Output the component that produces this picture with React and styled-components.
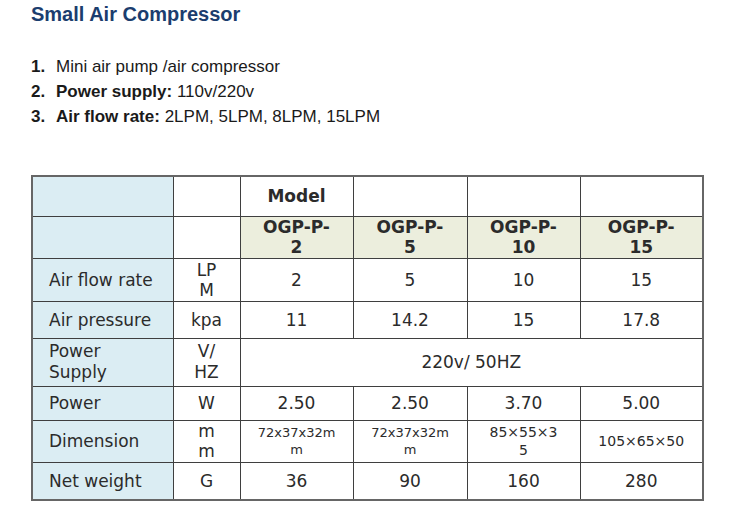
import React from "react";
import styled, { createGlobalStyle } from "styled-components";

const Global = createGlobalStyle`
  html, body { margin: 0; padding: 0; background: #ffffff; }
  body { font-family: "Liberation Sans", Arial, sans-serif; }
`;

const Page = styled.div`
  width: 750px;
  height: 520px;
  padding: 2px 0 0 31px;
  box-sizing: border-box;
  overflow: hidden;
`;

const Title = styled.h1`
  margin: 0;
  font-family: "Liberation Sans", Arial, sans-serif;
  font-weight: bold;
  font-size: 20px;
  line-height: 24px;
  color: #1b3d6e;
`;

const List = styled.ol`
  list-style: none;
  margin: 28px 0 0 0;
  padding: 0;
  font-family: "Liberation Sans", Arial, sans-serif;
  font-size: 17px;
  line-height: 25px;
  color: #1a1a1a;
`;

const Item = styled.li`
  display: flex;
`;

const Num = styled.span`
  font-weight: bold;
  width: 25px;
  flex: none;
`;

const Strong = styled.b`
  font-weight: bold;
`;

const Table = styled.table`
  margin-top: 46px;
  border-collapse: collapse;
  table-layout: fixed;
  width: 671px;
  border: 2px solid #666;
  font-family: "DejaVu Sans", Verdana, sans-serif;
  font-size: 17px;
  color: #2b2b2b;
`;

const Cell = styled.td`
  border: 1.5px solid #3f3f3f;
  padding: 0;
  text-align: ${(p) => (p.$left ? "left" : "center")};
  padding-left: ${(p) => (p.$left ? "16px" : "0")};
  vertical-align: middle;
  background: ${(p) => (p.$bg === "blue" ? "#dbedf3" : p.$bg === "green" ? "#eceedd" : "#ffffff")};
  font-weight: ${(p) => (p.$bold ? "bold" : "normal")};
  font-size: ${(p) => p.$size || "17px"};
  line-height: ${(p) => p.$lh || "20px"};
`;

const Row = styled.tr`
  height: ${(p) => p.$h}px;
`;

const models = ["2", "5", "10", "15"];

export default function App() {
  return (
    <>
      <Global />
      <Page>
        <Title>Small Air Compressor</Title>
        <List>
          <Item><Num>1.</Num><span>Mini air pump /air compressor</span></Item>
          <Item><Num>2.</Num><span><Strong>Power supply:</Strong> 110v/220v</span></Item>
          <Item><Num>3.</Num><span><Strong>Air flow rate:</Strong> 2LPM, 5LPM, 8LPM, 15LPM</span></Item>
        </List>
        <Table>
          <colgroup>
            <col style={{ width: 141 }} />
            <col style={{ width: 67 }} />
            <col style={{ width: 113 }} />
            <col style={{ width: 114 }} />
            <col style={{ width: 113 }} />
            <col style={{ width: 123 }} />
          </colgroup>
          <tbody>
            <Row $h={40}>
              <Cell $bg="blue" />
              <Cell />
              <Cell $bold>Model</Cell>
              <Cell />
              <Cell />
              <Cell />
            </Row>
            <Row $h={42}>
              <Cell $bg="blue" />
              <Cell />
              {models.map((m) => (
                <Cell key={m} $bg="green" $bold>OGP-P-<br />{m}</Cell>
              ))}
            </Row>
            <Row $h={43}>
              <Cell $bg="blue" $left>Air flow rate</Cell>
              <Cell>LP<br />M</Cell>
              <Cell>2</Cell>
              <Cell>5</Cell>
              <Cell>10</Cell>
              <Cell>15</Cell>
            </Row>
            <Row $h={37}>
              <Cell $bg="blue" $left>Air pressure</Cell>
              <Cell>kpa</Cell>
              <Cell>11</Cell>
              <Cell>14.2</Cell>
              <Cell>15</Cell>
              <Cell>17.8</Cell>
            </Row>
            <Row $h={48}>
              <Cell $bg="blue" $left $lh="21px">Power<br />Supply</Cell>
              <Cell $lh="21px">V/<br />HZ</Cell>
              <Cell colSpan={4}>220v/ 50HZ</Cell>
            </Row>
            <Row $h={34}>
              <Cell $bg="blue" $left>Power</Cell>
              <Cell>W</Cell>
              <Cell>2.50</Cell>
              <Cell>2.50</Cell>
              <Cell>3.70</Cell>
              <Cell>5.00</Cell>
            </Row>
            <Row $h={42}>
              <Cell $bg="blue" $left>Dimension</Cell>
              <Cell>m<br />m</Cell>
              <Cell $size="13px" $lh="17px">72x37x32m<br />m</Cell>
              <Cell $size="13px" $lh="17px">72x37x32m<br />m</Cell>
              <Cell $size="14px" $lh="18px">85×55×3<br />5</Cell>
              <Cell $size="14px">105×65×50</Cell>
            </Row>
            <Row $h={38}>
              <Cell $bg="blue" $left>Net weight</Cell>
              <Cell>G</Cell>
              <Cell>36</Cell>
              <Cell>90</Cell>
              <Cell>160</Cell>
              <Cell>280</Cell>
            </Row>
          </tbody>
        </Table>
      </Page>
    </>
  );
}
